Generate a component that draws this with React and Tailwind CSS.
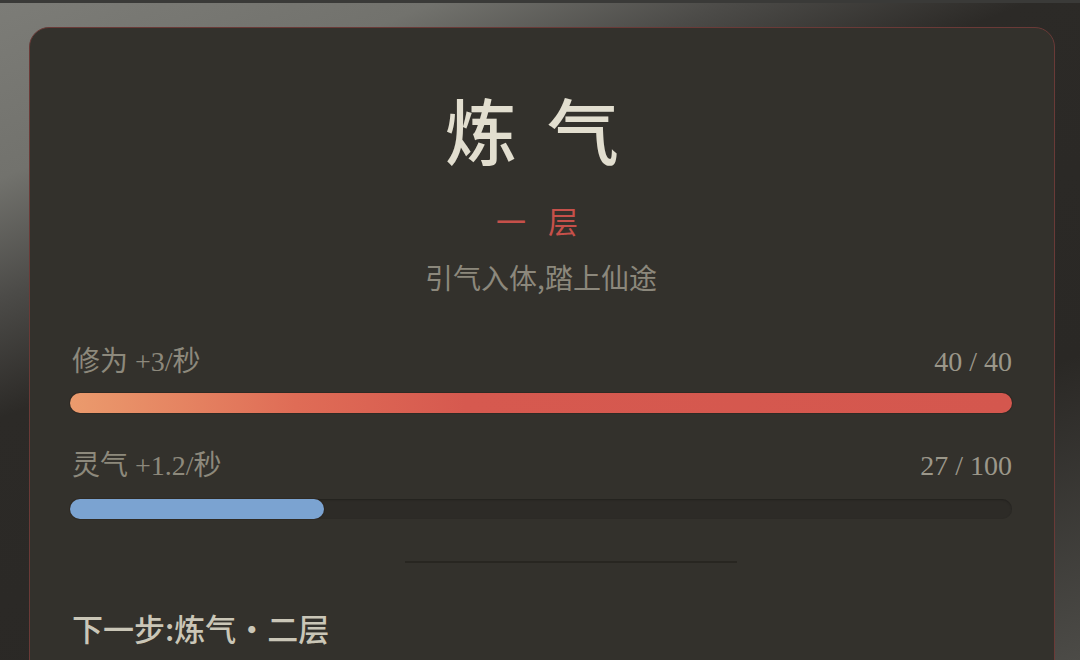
import React from 'react';

const CJK = { fontFamily: '"Noto Sans CJK SC", sans-serif' };

const stats = [
  { label: '修为 +3/秒', cur: 40, max: 40, bar: 'bg-[linear-gradient(90deg,#eb9b6d_0%,#df6c56_24%,#d6594f_42%,#d4574e_100%)]' },
  { label: '灵气 +1.2/秒', cur: 27, max: 100, bar: 'bg-[#7ba3d1]' },
];

function StatRow({ label, cur, max, bar, first }) {
  const pct = Math.round((cur / max) * 100);
  return (
    <div className={first ? 'mt-[49px]' : 'mt-[35px]'}>
      <div className="flex justify-between h-[36px] items-center pl-[2px] text-[28px] leading-[36px] font-['Liberation_Serif','Noto_Sans_CJK_SC',serif]">
        <span className="text-[#8d897c]">{label}</span>
        <span className="text-[#9b978a]">{cur} / {max}</span>
      </div>
      <div className={`${first ? 'mt-[13px]' : 'mt-[15px]'} h-[20px] rounded-full bg-[#2d2b27] shadow-[inset_0_1px_2px_rgba(0,0,0,0.25)]`}>
        <div className={`h-full rounded-full ${bar} shadow-[0_0_0_1px_rgba(40,25,20,0.3)]`} style={{ width: `${pct}%` }} />
      </div>
    </div>
  );
}

export default function App() {
  return (
    <div className="w-[1080px] h-[660px] overflow-hidden border-t-[3px] border-[#3a3a38] bg-[linear-gradient(158deg,#7c7c77_0%,#72726d_16%,#4c4b48_27%,#2c2a27_38%,#2a2825_72%,#4c4b47_100%)] pl-[29px] pr-[25px] pt-[24px]">
      <div className="h-[700px] rounded-[20px] border-[1.5px] border-[#6a3a37] bg-[#33312c] pl-[40px] pr-[42px] pt-[60px]" style={CJK}>
        <div className="text-center text-[72px] leading-[80px] font-medium text-[#e2decf] tracking-[30px] pl-[12px]">炼气</div>
        <div className="mt-[34px] text-center text-[30px] leading-[36px] text-[#c6504a] tracking-[22px] pl-[14px]">一层</div>
        <div className="mt-[21px] text-center text-[28px] leading-[36px] text-[#8c887c]">引气入体,踏上仙途</div>

        {stats.map((s, i) => (
          <StatRow key={s.label} {...s} first={i === 0} />
        ))}

        <div className="mt-[42px] ml-[335px] w-[332px] h-[2px] bg-[#282621]" />

        <div className="mt-[45px] pl-[2px] text-[31px] leading-[40px] font-medium text-[#cac6b7]">下一步:炼气·二层</div>
      </div>
    </div>
  );
}
